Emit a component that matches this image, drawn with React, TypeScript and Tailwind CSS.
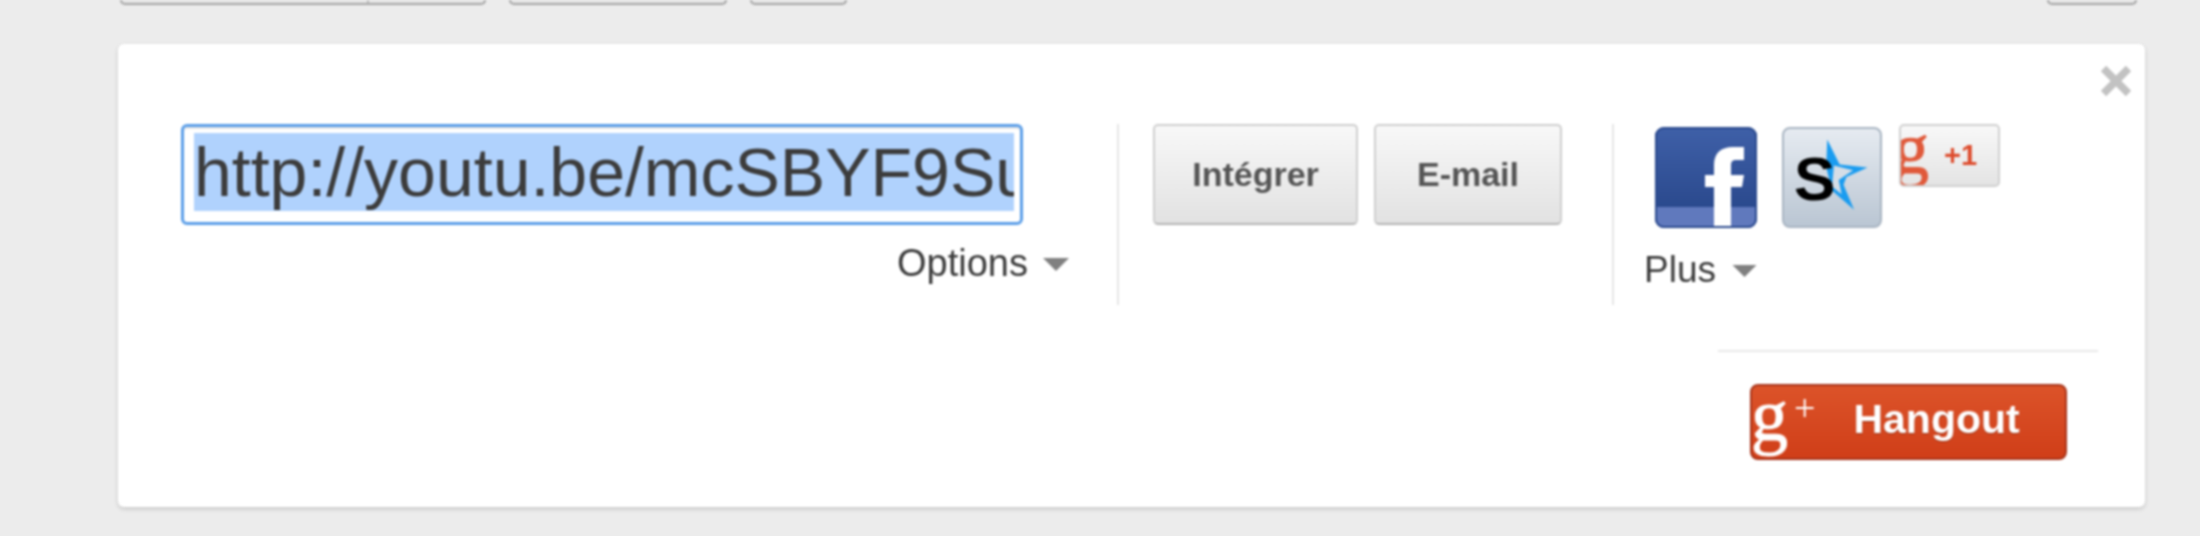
import { X } from "lucide-react";

const sans = "font-['Liberation_Sans',Arial,sans-serif]";

function Caret({ className }: { className?: string }) {
  return (
    <svg viewBox="0 0 26 13" className={className}>
      <path d="M0 0H26L13 13Z" fill="#808080" />
    </svg>
  );
}

function Divider() {
  return <div className="w-[2px] h-[181px] bg-[#e6e6e6] shrink-0" />;
}

function GrayButton({ label, className }: { label: string; className?: string }) {
  return (
    <button
      className={`h-[101px] rounded-[5px] border-2 border-[#cfcfcf] border-b-[#b5b5b5] bg-gradient-to-b from-[#f8f8f8] to-[#e2e2e2] text-[34px] font-bold text-[#555] ${className}`}
    >
      {label}
    </button>
  );
}

function FacebookIcon() {
  return (
    <svg viewBox="0 0 102 101" className="w-[102px] h-[101px] mt-[3px] shrink-0">
      <defs>
        <linearGradient id="fbg" x1="0" y1="0" x2="0" y2="1">
          <stop offset="0" stopColor="#3f60a8" />
          <stop offset="0.78" stopColor="#2b4a8e" />
        </linearGradient>
        <clipPath id="fbc">
          <rect width="102" height="101" rx="9" />
        </clipPath>
      </defs>
      <g clipPath="url(#fbc)">
        <rect width="102" height="101" fill="url(#fbg)" />
        <rect y="80" width="102" height="21" fill="#6079bd" />
        <path
          d="M59 101V60H50V48H59V38C59 26 66 20 78 20H89V33H81C77 33 76 35 76 39V48H89L87 60H76V101Z"
          fill="#fff"
        />
      </g>
      <rect x="1" y="1" width="100" height="99" rx="8" fill="none" stroke="#2b4a8e" strokeWidth="2" />
    </svg>
  );
}

function StumbleIcon() {
  return (
    <div className="relative w-[100px] h-[101px] mt-[3px] ml-[25px] shrink-0 rounded-[8px] border-2 border-[#a9b5c2] bg-gradient-to-b from-[#e6ebf1] to-[#bac6d3] overflow-hidden">
      <svg viewBox="0 0 100 101" className="w-full h-full">
        <path d="M45 11L58 37L87 40L65 50L62 58L73 84L50 64L44 40Z" fill="#1a9cf0" />
        <path d="M52 38L72 43L57 53L60 68L50 60Z" fill="#d5dde6" />
      </svg>
      <span className="absolute left-[10px] top-[20px] text-[62px] leading-[60px] font-bold text-black">S</span>
    </div>
  );
}

function PlusOne() {
  return (
    <div className="flex items-center w-[101px] h-[63px] ml-[17px] shrink-0 rounded-[5px] border-2 border-[#d0d0d0] bg-gradient-to-b from-[#f8f8f8] to-[#e4e4e4] overflow-hidden">
      <span className="font-['Liberation_Serif',serif] [-webkit-text-stroke:1px_#e0593a] text-[72px] leading-[60px] -mt-[14px] -ml-[8px] w-[37px] text-[#e0593a]">
        g
      </span>
      <span className="text-[29px] font-bold text-[#dd4b2c] ml-[14px]">+1</span>
    </div>
  );
}

export default function App() {
  return (
    <div className="h-[536px] w-[2200px] overflow-hidden bg-[#ececec]">
      <div className={`${sans} h-[536px] blur-[1px]`}>
        {/* toolbar, cut off at the top of the shot */}
        <div className="flex h-[5px] pl-[120px] pr-[63px]">
          <div className="flex w-[366px] rounded-b-[5px] border-2 border-t-0 border-[#a5a5a5] bg-[#e6e6e6]">
            <div className="w-[247px] border-r-2 border-[#bbb]" />
          </div>
          <div className="w-[218px] ml-[23px] rounded-b-[5px] border-2 border-t-0 border-[#a5a5a5] bg-[#e6e6e6]" />
          <div className="w-[97px] ml-[23px] rounded-b-[5px] border-2 border-t-0 border-[#a5a5a5] bg-[#e6e6e6]" />
          <div className="w-[90px] ml-auto rounded-b-[5px] border-2 border-t-0 border-[#a5a5a5] bg-[#e6e6e6]" />
        </div>

        <div className="relative mt-[39px] ml-[118px] w-[2027px] h-[463px] rounded-[6px] bg-white shadow-[0_2px_4px_rgba(0,0,0,0.16)] pt-[80px] pl-[63px]">
          <X className="absolute top-[12px] right-[4px] w-[50px] h-[50px] text-[#c2c2c2]" strokeWidth={3.6} strokeLinecap="butt" />

          <div className="flex h-[181px]">
            <div className="w-[888px] shrink-0">
              <div className="w-[842px] h-[101px] rounded-[6px] border-[3px] border-[#5b9ee8] bg-white pl-[10px] pr-[6px] pt-[6px] shadow-[inset_0_2px_0_#e6e6e6]">
                <div className="overflow-hidden whitespace-nowrap text-[68px] leading-[79px] text-[#3c3c3c] h-[80px]">
                  <span className="bg-[#b0d2fd] py-[1px]">http://youtu.be/mcSBYF9Su</span>
                </div>
              </div>
              <div className="flex items-center justify-end gap-[15px] mt-[10px] text-[38px] text-[#3c3c3c]">
                <span>Options</span>
                <Caret className="w-[26px] h-[13px] mt-[2px]" />
              </div>
            </div>

            <div className="ml-[48px]">
              <Divider />
            </div>

            <div className="flex gap-[16px] ml-[34px] w-[459px] shrink-0">
              <GrayButton label="Intégrer" className="w-[205px]" />
              <GrayButton label="E-mail" className="w-[188px]" />
            </div>

            <Divider />

            <div className="ml-[30px]">
              <div className="flex items-start ml-[11px]">
                <FacebookIcon />
                <StumbleIcon />
                <PlusOne />
              </div>
              <div className="flex items-center gap-[16px] mt-[14px] text-[37px] text-[#3c3c3c]">
                <span>Plus</span>
                <Caret className="w-[25px] h-[12px] mt-[2px]" />
              </div>
            </div>
          </div>

          <div className="flex flex-col items-end">
            <div className="w-[380px] h-[2px] mt-[45px] mr-[47px] bg-[#e8e8e8]" />
            <button className="flex items-center w-[317px] h-[76px] mt-[32px] mr-[78px] rounded-[8px] border-2 border-[#a8341a] bg-gradient-to-b from-[#dc5329] to-[#d03e18] overflow-hidden text-white">
              <span className="font-['Liberation_Serif',serif] [-webkit-text-stroke:1px_white] text-[74px] leading-[64px] -mt-[14px] ml-[-1px] w-[36px]">g</span>
              <span className="font-['Liberation_Serif',serif] text-[38px] leading-[40px] -mt-[28px] ml-[7px]">+</span>
              <span className="text-[41px] font-bold ml-[38px] -mt-[4px] [text-shadow:0_1px_1px_rgba(0,0,0,0.3)]">Hangout</span>
            </button>
          </div>
        </div>
      </div>
    </div>
  );
}
